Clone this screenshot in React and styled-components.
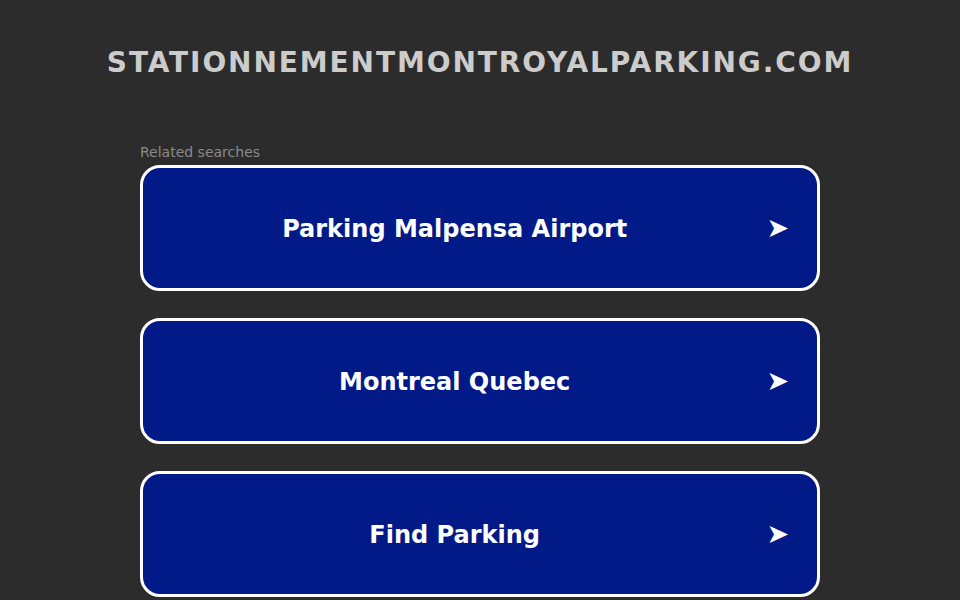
import React from "react";
import styled, { createGlobalStyle } from "styled-components";

const Global = createGlobalStyle`
  html, body { margin: 0; padding: 0; background: #2c2c2c; }
  body { font-family: "DejaVu Sans", sans-serif; }
`;

const Page = styled.div`
  display: flex;
  flex-direction: column;
  align-items: center;
`;

const Title = styled.h1`
  margin: 45px 0 0;
  font-size: 28px;
  line-height: 36px;
  font-weight: bold;
  letter-spacing: 1.9px;
  color: #cccccc;
`;

const Section = styled.div`
  width: 680px;
  margin-top: 63px;
  display: flex;
  flex-direction: column;
`;

const Label = styled.div`
  font-size: 14px;
  line-height: 16px;
  color: #8a8a8a;
  margin-bottom: 5px;
`;

const List = styled.div`
  display: flex;
  flex-direction: column;
  gap: 27px;
`;

const Item = styled.a`
  display: flex;
  align-items: center;
  height: 120px;
  border: 3px solid #ffffff;
  border-radius: 20px;
  background: #021a87;
  color: #ffffff;
  text-decoration: none;
  cursor: pointer;
`;

const ItemText = styled.span`
  flex: 1;
  text-align: center;
  font-size: 24px;
  line-height: 30px;
  font-weight: bold;
  margin-top: 2px;
`;

const Arrow = styled.span`
  font-size: 27px;
  line-height: 30px;
  margin-right: 28px;
  margin-bottom: 1px;
`;

const items = ["Parking Malpensa Airport", "Montreal Quebec", "Find Parking"];

export default function App() {
  return (
    <>
      <Global />
      <Page>
        <Title>STATIONNEMENTMONTROYALPARKING.COM</Title>
        <Section>
          <Label>Related searches</Label>
          <List>
            {items.map((t) => (
              <Item key={t}>
                <ItemText>{t}</ItemText>
                <Arrow>➤</Arrow>
              </Item>
            ))}
          </List>
        </Section>
      </Page>
    </>
  );
}
